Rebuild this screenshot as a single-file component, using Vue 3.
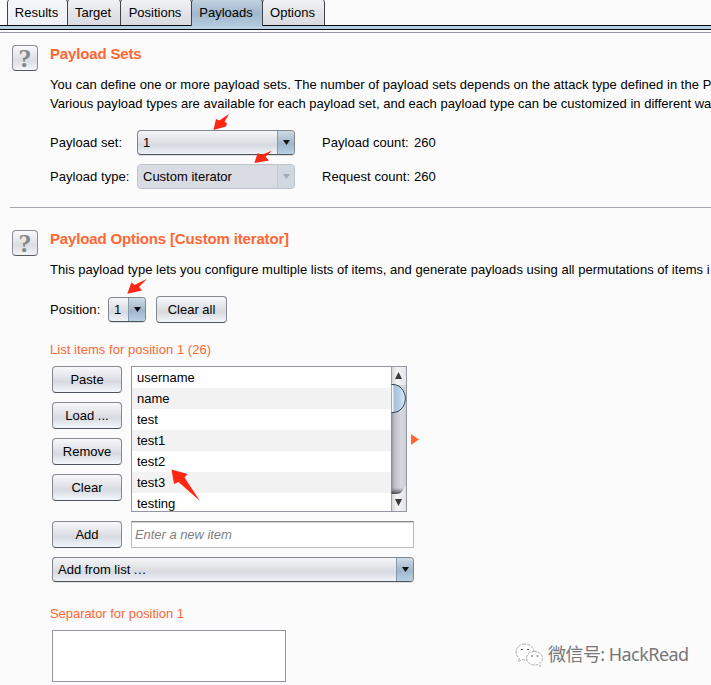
<script setup>
import { ref } from 'vue'

const tabs = [
    { text: 'Results', width: 60 },
    { text: 'Target', width: 53 },
    { text: 'Positions', width: 71 },
    { text: 'Payloads', width: 71 },
    { text: 'Options', width: 62 },
]
const activeTab = ref('Payloads')
const items = ['username', 'name', 'test', 'test1', 'test2', 'test3', 'testing']
const listButtons = ['Paste', 'Load ...', 'Remove', 'Clear']
const newItem = ref('')
const separator = ref('')
</script>

<template>
    <div class="intruder">
        <nav class="tabs">
            <button v-for="tab in tabs" :key="tab.text" type="button" :class="['tab', { active: tab.text == activeTab }]"
                :style="{ width: tab.width + 1 + 'px' }" @click="activeTab = tab.text">{{ tab.text }}</button>
        </nav>
        <div class="tab-band"></div>
        <div class="tab-line"></div>

        <section class="panel sets">
            <div class="help">?</div>
            <div class="body">
                <h2 class="title-sets">Payload Sets</h2>
                <p class="desc">
                    <span class="line line-a">You can define one or more payload sets. The number of payload sets depends on the attack type defined in the P</span>
                    <span class="line line-b">Various payload types are available for each payload set, and each payload type can be customized in different wa</span>
                </p>
                <div class="form-row">
                    <label>Payload set:</label>
                    <div class="combo"><span>1</span><i><svg width="7" height="5"><path d="M0 0h7L3.500 5z" /></svg></i></div>
                    <span class="count">Payload count:</span><span>260</span>
                </div>
                <div class="form-row">
                    <label>Payload type:</label>
                    <div class="combo disabled"><span>Custom iterator</span><i><svg width="7" height="5"><path d="M0 0h7L3.500 5z" /></svg></i></div>
                    <span class="count">Request count:</span><span>260</span>
                </div>
            </div>
        </section>

        <hr>

        <section class="panel options">
            <div class="help">?</div>
            <div class="body">
                <h2 class="title-options">Payload Options [Custom iterator]</h2>
                <p class="desc">
                    <span class="line line-c">This payload type lets you configure multiple lists of items, and generate payloads using all permutations of items i</span>
                </p>
                <div class="position-row">
                    <label>Position:</label>
                    <div class="combo small"><span>1</span><i><svg width="7" height="5"><path d="M0 0h7L3.500 5z" /></svg></i></div>
                    <button type="button" class="btn clear-all">Clear all</button>
                </div>
                <h3 class="list-title">List items for position 1 (26)</h3>
                <div class="list-row">
                    <div class="btn-col">
                        <button v-for="b in listButtons" :key="b" type="button" class="btn">{{ b }}</button>
                    </div>
                    <div class="list">
                        <ul>
                            <li v-for="item in items" :key="item">{{ item }}</li>
                        </ul>
                        <svg class="scrollbar" width="15" height="144" viewBox="0 0 15 144">
                            <defs>
                                <linearGradient id="btnFill"><stop offset="0" stop-color="#cfd0d3" /><stop offset=".4" stop-color="#f5f5f6" /><stop offset="1" stop-color="#e3e4e7" /></linearGradient>
                                <linearGradient id="track"><stop offset="0" stop-color="#8b8c94" /><stop offset=".25" stop-color="#bfc0c8" /><stop offset=".7" stop-color="#d6d7df" /><stop offset="1" stop-color="#cccdd5" /></linearGradient>
                                <linearGradient id="thumb"><stop offset="0" stop-color="#e9f1f8" /><stop offset=".14" stop-color="#f5f9fc" /><stop offset=".2" stop-color="#a9c0d6" /><stop offset=".5" stop-color="#b4cce2" /><stop offset="1" stop-color="#d9ecfb" /></linearGradient>
                                <linearGradient id="shade" x2="0" y2="1"><stop offset="0" stop-color="#444" stop-opacity="0" /><stop offset="1" stop-color="#333" stop-opacity=".85" /></linearGradient>
                            </defs>
                            <rect width="15" height="144" fill="url(#btnFill)" />
                            <path d="M0 18H15V119C13 120 12 127 5 127H0z" fill="url(#track)" />
                            <path d="M0 121H13C11 124 10 127 5 127H0z" fill="url(#shade)" />
                            <path d="M0 17.500H2C9 17.500 14.300 24 14.300 31.500S9 45.500 2 45.500H0z" fill="url(#thumb)" />
                            <path d="M0 17.500H2C9 17.500 14.300 24 14.300 31.500S9 45.500 2 45.500H0" fill="none" stroke="#2c4457" />
                            <path d="M.5 0V144" stroke="#8a8c91" stroke-opacity=".7" />
                            <path d="M4 12h7L7.500 5z M4 132h7L7.500 139z" fill="#3a3a3a" />
                        </svg>
                    </div>
                    <svg class="expand" width="8" height="11"><path d="M0 0L8 5.500L0 11z" fill="#ff6633" /></svg>
                </div>
                <div class="add-row">
                    <button type="button" class="btn">Add</button>
                    <input v-model="newItem" type="text" placeholder="Enter a new item">
                </div>
                <div class="combo wide"><span>Add from list <b>...</b></span><i><svg width="7" height="5"><path d="M0 0h7L3.500 5z" /></svg></i></div>
                <h3 class="sep-title">Separator for position 1</h3>
                <textarea v-model="separator"></textarea>
            </div>
        </section>

        <!-- hand drawn pointers over the form -->
        <svg class="marks" width="711" height="685">
            <path d="M213.500 130L216 119L219.300 120.500L229 114L224.500 122L227 123L226 126.500z" />
            <path d="M254.300 163L257.700 153L261 155L272 150.800L265.500 156.700L269 160.500z" />
            <path d="M127.300 293.700L131.500 282.300L134.500 285L147 278.800L139 287L142 290.500z" />
            <path d="M171.500 469.500L187.500 474L184.500 477.500L200 501L178.500 482L174 484z" />
        </svg>

        <div class="watermark">
            <svg width="28" height="24" viewBox="0 0 28 24">
                <g fill="#fff" stroke="#999" stroke-width=".8" stroke-dasharray="3 1">
                    <path d="M10 1C5 1 1 4.500 1 9c0 2.500 1.300 4.600 3.300 6L3.500 18.500L7 16.500c1 .3 2 .4 3.500.4C15.500 17 19 13 19 9S15 1 10 1z" />
                    <path d="M19.500 8.500c-4.500 0-8 3-8 6.700s3.500 6.800 8 6.800c1 0 2-.2 3-.5l3 2-.7-3c1.700-1.200 2.700-3 2.700-5.300 0-3.700-3.500-6.700-8-6.700z" />
                </g>
                <path d="M6 6.500h2M12 6.500h2M16 13h2M21.500 13h2" stroke="#555" stroke-width="1.200" />
            </svg>
            <span>微信号: HackRead</span>
        </div>
    </div>
</template>

<style>
html,
body {
    margin: 0;
    overflow: hidden;
}
</style>

<style scoped>
.intruder {
    position: relative;
    width: 711px;
    height: 685px;
    overflow: hidden;
    background: #fbfbfb;
    color: #000;
    font: 13px/19px "Liberation Sans", Arial, sans-serif;
}

* {
    box-sizing: border-box;
}

button,
input,
textarea {
    font: inherit;
    color: #000;
    padding: 0;
    margin: 0;
    outline: none;
}

h2,
h3,
p,
ul {
    margin: 0;
    padding: 0;
}

.tabs {
    display: flex;
    height: 25px;
    padding-left: 7px;
}

.tab {
    height: 27px;
    margin: -2px -1px 0 0;
    padding: 0 2px 0 0;
    border: 1px solid #3f4246;
    border-bottom: 0;
    border-radius: 5px 5px 0 0;
    background: linear-gradient(#f1f2f6, #e2e3e8 60%, #d9dbe1);
}

.tab:first-child {
    background: linear-gradient(#f4f6fa, #edf0f6);
}

.tab.active {
    position: relative;
    height: 28px;
    background: linear-gradient(#c3d3e0, #a1b7cd 55%, #b4cadd);
}

.tab-band {
    height: 5px;
    border-top: 1px solid #06090e;
    border-bottom: 1px solid #06090e;
    background: #b6cfe2;
}

.tab-line {
    height: 1px;
    margin-top: 2px;
    background: #9297a1;
}

.panel {
    display: grid;
    grid-template-columns: 26px 1fr;
    column-gap: 12px;
    padding-left: 12px;
}

.sets {
    padding-top: 12px;
    height: 174px;
}

.options {
    padding-top: 22px;
}

.body {
    min-width: 0;
}

.help {
    height: 26px;
    border: 1px solid #8a8d93;
    border-bottom-color: #55595f;
    border-radius: 4px;
    background: linear-gradient(#fafafb, #dcdde3 60%, #f3f5f9);
    color: #85868a;
    font: bold 26px/25px "Liberation Serif", serif;
    text-align: center;
}

h2 {
    height: 20px;
    color: #ff6633;
    font-size: 15px;
    line-height: 17px;
    letter-spacing: -.16px;
    white-space: nowrap;
}

.desc {
    padding-top: 10px;
    white-space: nowrap;
}

.line {
    display: block;
    height: 19px;
}

.line-a {
    letter-spacing: .033px;
}

.line-b {
    letter-spacing: .018px;
}

.line-c {
    letter-spacing: .03px;
}

.form-row {
    display: flex;
    align-items: center;
    height: 25px;
    margin-bottom: 9px;
}

.desc+.form-row {
    margin-top: 17px;
}

.form-row label {
    width: 87px;
    letter-spacing: .05px;
}

.count {
    width: 119px;
    padding-left: 27px;
    letter-spacing: .05px;
}

.combo {
    display: flex;
    width: 158px;
    height: 25px;
    border: 1px solid #81858c;
    border-bottom-color: #4c535b;
    border-radius: 4px;
    background: linear-gradient(#f6f6f8, #dddfe4 50%, #d6d9e0 60%, #eff2f7);
    line-height: 23px;
    box-shadow: 0 1px 0 #dcdde0;
    overflow: hidden;
}

.combo span {
    flex: 1;
    padding-left: 5px;
}

.combo b {
    font-weight: normal;
    letter-spacing: .6px;
}

.combo i {
    display: flex;
    align-items: center;
    justify-content: center;
    width: 17px;
    border-left: 1px solid #8299af;
    background: linear-gradient(#cddbe6, #a0b6cc 55%, #bad0e3);
}

.combo i svg {
    width: 7px;
    fill: #111;
}

.combo.disabled {
    border-color: #bfc2ca;
    background: #d8dbe2;
    box-shadow: none;
}

.combo.disabled i {
    border-left-color: #c1cad5;
    background: #d0d7e0;
}

.combo.disabled i svg {
    fill: #a2a9b3;
}

hr {
    height: 1px;
    margin: 0 0 0 10px;
    border: 0;
    background: #a5a6b1;
}

.position-row {
    display: flex;
    align-items: center;
    height: 27px;
    margin-top: 17px;
}

.position-row label {
    width: 58px;
    letter-spacing: .05px;
}

.combo.small {
    width: 38px;
}

.btn {
    display: block;
    width: 70px;
    height: 27px;
    border: 1px solid #85888f;
    border-bottom-color: #4d535c;
    border-radius: 4px;
    background: linear-gradient(#f8f8fa, #dedfe4 50%, #d7dae0 60%, #f3f6fa);
    text-align: center;
    line-height: 24px;
}

.btn.clear-all {
    width: 71px;
    margin-left: 10px;
}

h3 {
    height: 19px;
    color: #ff6633;
    font-size: 13px;
    font-weight: normal;
}

.list-title {
    margin-top: 17px;
    letter-spacing: .05px;
}

.list-row {
    display: flex;
    align-items: center;
    padding-left: 2px;
    margin-top: 7px;
}

.btn-col {
    display: flex;
    flex-direction: column;
    gap: 9px;
    align-self: flex-start;
}

.list {
    display: flex;
    width: 276px;
    height: 146px;
    margin-left: 9px;
    border: 1px solid #9297a1;
    background: #fff;
    overflow: hidden;
}

.list ul {
    flex: 1;
    list-style: none;
}

.list li {
    height: 21px;
    padding-left: 5px;
    line-height: 21px;
}

.list li:nth-child(even) {
    background: #f2f2f2;
}

.expand {
    margin-left: 4px;
}

.add-row {
    display: flex;
    gap: 9px;
    padding-left: 2px;
    margin-top: 9px;
}

.add-row input {
    width: 283px;
    height: 27px;
    padding: 0 0 1px 3px;
    border: 1px solid #b9babd;
    border-top-color: #88898c;
    border-radius: 0;
    background: #fff;
    box-shadow: inset 0 1px 0 #d0d1d3;
    font-style: italic;
    letter-spacing: -.05px;
}

.add-row input::placeholder {
    color: #808080;
    opacity: 1;
}

.combo.wide {
    width: 362px;
    margin: 9px 0 0 2px;
}

.sep-title {
    margin-top: 22px;
    letter-spacing: -.05px;
}

textarea {
    display: block;
    width: 234px;
    height: 52px;
    margin: 7px 0 0 2px;
    border: 1px solid #9297a1;
    border-radius: 0;
    background: #fff;
    resize: none;
}

.marks {
    position: absolute;
    top: 0;
    left: 0;
    fill: #ff2614;
    pointer-events: none;
}

.watermark {
    position: absolute;
    top: 642px;
    left: 515px;
    display: flex;
    align-items: center;
    gap: 5px;
    color: #777;
    font: 18px/25px "Noto Sans", "Noto Sans CJK SC", sans-serif;
    letter-spacing: -.55px;
    white-space: nowrap;
}
</style>
